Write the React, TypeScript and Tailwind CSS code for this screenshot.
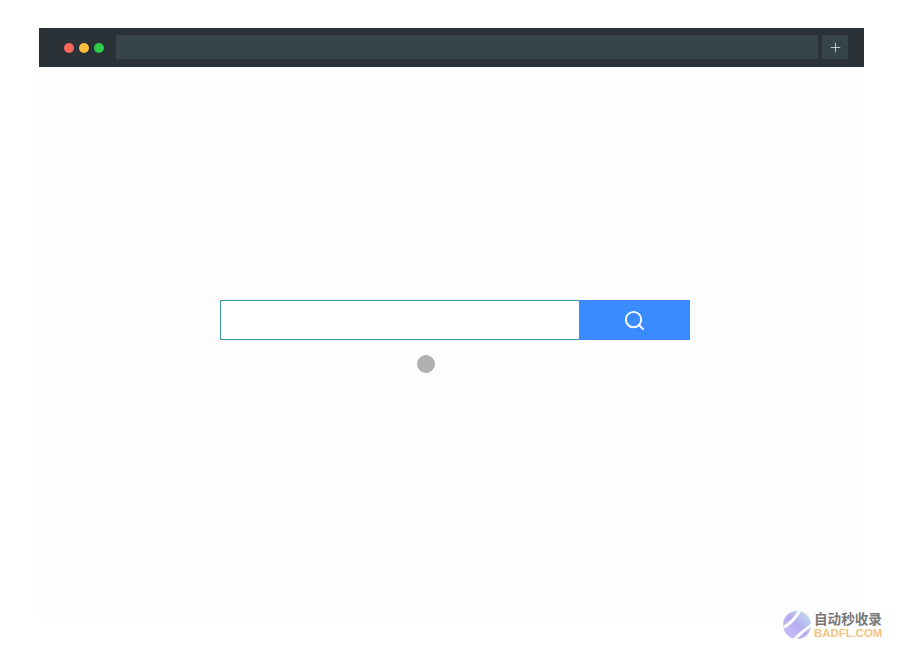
import { Plus, Search } from 'lucide-react'

const Watermark = () => (
  <div className="absolute left-[783px] top-[609px] flex items-start gap-[3px]">
    <svg width="28" height="31" viewBox="0 0 28 31">
      <defs>
        <linearGradient id="wm" x1="0" y1="1" x2="1" y2="0">
          <stop offset="0" stopColor="#c9c4f4" />
          <stop offset="0.5" stopColor="#b7aef0" />
          <stop offset="1" stopColor="#bfe6ec" />
        </linearGradient>
        <clipPath id="wmc">
          <circle cx="14" cy="16" r="14" />
        </clipPath>
      </defs>
      <circle cx="14" cy="16" r="14" fill="url(#wm)" />
      <g clipPath="url(#wmc)" stroke="#ffffff" strokeWidth="3" fill="none">
        <path d="M-2 19 C6 17 12 10 18 0" />
        <path d="M8 34 C15 26 22 20 32 14" />
      </g>
    </svg>
    <div className="flex flex-col pt-[1px] font-['Noto_Sans_CJK_SC',sans-serif] font-bold">
      <span className="h-[17px] text-[13.6px] leading-[17px] text-[#777777]">自动秒收录</span>
      <span className="h-[13px] font-['Liberation_Sans',sans-serif] text-[11.4px] leading-[13px] text-[#f3c47f]">BADFL.COM</span>
    </div>
  </div>
)

export default function App() {
  return (
    <div className="relative h-[667px] w-[903px] overflow-hidden bg-white pl-[39px] pt-[28px]">
      <div className="flex h-[589px] w-[825px] flex-col bg-[#fdfdfd]">
        {/* browser bar */}
        <div className="flex h-[39px] items-start gap-[4px] bg-[#2a3238] pl-[77px] pt-[7px]">
          <div className="flex h-[24px] w-[702px] items-center bg-[#364349]">
            <div className="-ml-[52px] flex items-center gap-[5px] pt-[2px]">
              <span className="h-[10px] w-[10px] rounded-full bg-[#f8665e]" />
              <span className="h-[10px] w-[10px] rounded-full bg-[#fbbe3f]" />
              <span className="h-[10px] w-[10px] rounded-full bg-[#2dcb48]" />
            </div>
          </div>
          <div className="flex h-[24px] w-[26px] items-center justify-center bg-[#364349] text-[#e4e9ea]">
            <Plus size={15} strokeWidth={1.25} />
          </div>
        </div>

        {/* search */}
        <div className="flex-1 pl-[181px] pt-[233px]">
          <div className="flex h-[40px] w-[470px]">
            <input className="h-[40px] w-[360px] border border-[#3c93a8] bg-white outline-none" />
            <button className="-ml-px flex h-[40px] w-[111px] items-center justify-center bg-[#3a8bff] text-white">
              <Search size={23} strokeWidth={2} />
            </button>
          </div>
          <div className="ml-[197px] mt-[15px] h-[18px] w-[18px] rounded-full bg-[#b0b0b0]" />
        </div>
      </div>
      <Watermark />
    </div>
  )
}
